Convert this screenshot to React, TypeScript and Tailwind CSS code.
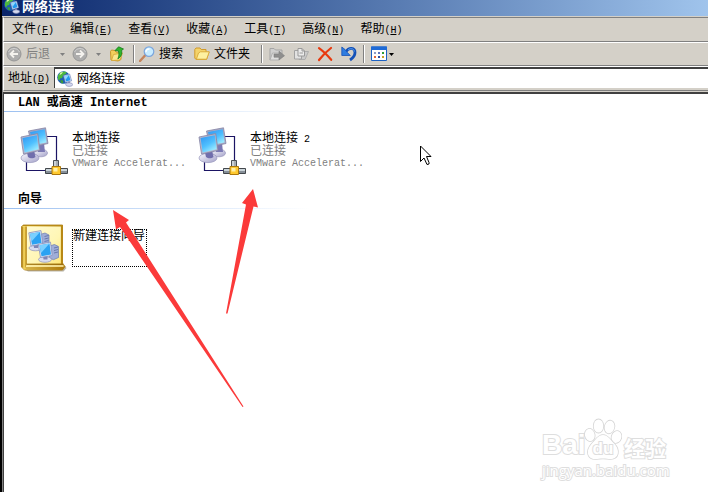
import React from 'react';

const CJK = 'font-["Liberation_Mono","Noto_Sans_CJK_SC",monospace]';

const menus = [
  { label: '文件', key: 'F' },
  { label: '编辑', key: 'E' },
  { label: '查看', key: 'V' },
  { label: '收藏', key: 'A' },
  { label: '工具', key: 'T' },
  { label: '高级', key: 'N' },
  { label: '帮助', key: 'H' },
];

const connections = [
  { name: '本地连接', suffix: '', status: '已连接', device: 'VMware Accelerat...' },
  { name: '本地连接', suffix: ' 2', status: '已连接', device: 'VMware Accelerat...' },
];

const AccessKey: React.FC<{ letter: string }> = ({ letter }) => (
  <span className="text-[10px]">
    (<span className="underline">{letter}</span>)
  </span>
);

const GlobeIcon = () => (
  <svg viewBox="0 0 16 16" className="w-4 h-4 shrink-0">
    <circle cx="6.5" cy="6.5" r="6.3" fill="#1f5fb0" />
    <path d="M1 4.5 3.5 1.2 7.5.4 9.8 1.2 8.4 3.2 6 4.2 5.2 7 3 7.4 2.4 9.6 1 8.2z" fill="#4cb83e" />
    <path d="M3 1.8 6 .8 5 2.6 2.6 4.2z" fill="#d5f2a6" />
    <path d="M3.4 9 6 9.6 6.2 12.4 3.8 11.8z" fill="#3a9c3a" />
    <path d="M6.4 4.6 12.6 3 14.6 9.8 8.4 11.6z" fill="#e8eefb" stroke="#5c70ac" strokeWidth=".6" />
    <path d="M7.3 5.3 12 4.1 13.5 9.2 9 10.5z" fill="#2499ee" />
    <path d="M7.3 5.3 12 4.1 8.6 8.8z" fill="#8fd8ff" />
    <path d="M10.6 10.9 13 10.4 13.2 12h-2z" fill="#7d84b8" />
    <ellipse cx="12.2" cy="13.6" rx="3.5" ry="1.8" fill="#d4d9ee" stroke="#7c83b0" strokeWidth=".6" />
  </svg>
);

const RoundArrow: React.FC<{ forward?: boolean }> = ({ forward }) => (
  <svg viewBox="0 0 16 16" className="w-4 h-4">
    <circle cx="8" cy="8" r="7" fill="#adadad" stroke="#969696" />
    <path d="M2.5 6a6 6 0 0 1 11 0" fill="none" stroke="#cfcfcf" />
    {forward ? (
      <path d="M4 8h7M8 4.5 11.5 8 8 11.5" fill="none" stroke="#f4f2ee" strokeWidth="1.8" />
    ) : (
      <path d="M12 8H5M8 4.5 4.5 8 8 11.5" fill="none" stroke="#f4f2ee" strokeWidth="1.8" />
    )}
  </svg>
);

const Caret: React.FC<{ dark?: boolean }> = ({ dark }) => (
  <svg viewBox="0 0 5 3" className="w-[5px] h-[3px]">
    <path d="M0 0h5L2.5 3z" fill={dark ? '#000' : '#808080'} />
  </svg>
);

const FolderUpIcon = () => (
  <svg viewBox="0 0 16 16" className="w-4 h-4">
    <path d="M1.5 5.5 2.5 4 6 4.5l1 1.500 5 .5v7l-3 1.500-7-1z" fill="#f3cf5b" stroke="#c9962a" />
    <path d="M4.5 8.5 13.5 7 11 14l-8.500.5z" fill="#fbe78e" stroke="#d3a537" strokeWidth=".8" />
    <path d="M6 4.600 9.600.8 14.500 3 12.600 4.400c.6 3.600-.4 6.600-3.800 8.400 1.300-2.400 1.500-5 .6-8z" fill="#2fb52b" stroke="#147a1c" strokeWidth=".8" />
  </svg>
);

const SearchIcon = () => (
  <svg viewBox="0 0 16 16" className="w-4 h-4">
    <path d="M1 15 6 9.5" stroke="#c4845c" strokeWidth="2.4" strokeLinecap="round" />
    <circle cx="10" cy="5.6" r="4.8" fill="#c8ecff" stroke="#7ba6dd" strokeWidth="1.2" />
    <path d="M7 6c0-2 1.5-3.3 3.5-3" fill="none" stroke="#fff" strokeWidth="1.4" />
  </svg>
);

const FolderIcon = () => (
  <svg viewBox="0 0 16 16" className="w-4 h-4">
    <path d="M.8 3.5 2 2h4l1.200 1.500H12V6h3L12.500 13.500H2L.8 12z" fill="#f4d36a" stroke="#d09a2b" strokeLinejoin="round" />
    <path d="M4.500 7 6.500 5.800h8.800L12.600 13.200H2.400z" fill="#fdf0a0" stroke="#d9a838" strokeWidth=".9" strokeLinejoin="round" />
  </svg>
);

const MoveToIcon = () => (
  <svg viewBox="0 0 16 16" className="w-4 h-4">
    <path d="M1 14V2.500h4L6.500 4H13v4" fill="#cfcfcf" stroke="#a5a5a5" />
    <path d="M1 14 3.500 7H12l-2 7z" fill="#dedede" stroke="#b0b0b0" />
    <path d="M5 8h5V5.200l5.500 4.500L10 14v-2.800H5z" fill="#8e8e8e" stroke="#7d7d7d" strokeWidth=".6" />
  </svg>
);

const CopyToIcon = () => (
  <svg viewBox="0 0 16 16" className="w-4 h-4">
    <path d="M6 13.500 9 5.500h6.500L12 13.500z" fill="#cacaca" stroke="#adadad" />
    <path d="M1.500 4.500h5l2 2v6.500h-7z" fill="#e2e2e2" stroke="#a2a2a2" />
    <path d="M5 2.500h4l2.500 2.500v5H5z" fill="#ebebeb" stroke="#999" />
    <path d="M9 2.500V5h2.500M6.500 7h3.500" fill="none" stroke="#999" />
  </svg>
);

const DeleteIcon = () => (
  <svg viewBox="0 0 16 16" className="w-4 h-4">
    <path d="M2 2.200C6 5 10.500 9.500 14.200 13.800M14 2C9.500 5.500 5 10 2 14" fill="none" stroke="#e8390e" strokeWidth="2.2" strokeLinecap="round" />
  </svg>
);

const UndoIcon = () => (
  <svg viewBox="0 0 16 16" className="w-4 h-4">
    <path d="M5 5.500C8 .8 14 1.500 14 6.500c0 3-2 5.500-5 7.500" fill="none" stroke="#1552b8" strokeWidth="2.8" />
    <path d="M.8 1v8.500h8.500L6.600 6.800 4 3.500z" fill="#2d7ce0" stroke="#1552b8" strokeWidth=".8" />
    <path d="M7 4C9 2 12.800 2 13.400 5.500" fill="none" stroke="#5ba2f2" />
  </svg>
);

const ViewsIcon = () => (
  <svg viewBox="0 0 16 16" className="w-4 h-4">
    <path d="M.5 1h15v13.500H.5z" fill="#fff" stroke="#1d62c4" />
    <path d="M0 .5h16V4H0z" fill="#1f6bd6" />
    <path d="M3 6h2v2H3z" fill="#8e9cc4" />
    <path d="M7 6h2v2H7z" fill="#5c74bd" />
    <path d="M11 6h2v2h-2z" fill="#2b9c35" />
    <path d="M3 10h2v2H3z" fill="#e0673c" />
    <path d="M7 10h2v2H7z" fill="#2d4fa0" />
    <path d="M11 10h2v2h-2z" fill="#c9a227" />
  </svg>
);

const Separator = () => <div className="w-[2px] h-[18px] border-l border-[#808080] bg-white" />;

const NetworkIcon: React.FC<{ id: string }> = ({ id }) => (
  <svg viewBox="0 0 48 48" className="w-12 h-12 shrink-0">
    <defs>
      <linearGradient id={`${id}-screen`} x1="0" y1="0" x2=".6" y2="1">
        <stop offset="0" stopColor="#2f92f0" />
        <stop offset=".6" stopColor="#4fc0ff" />
        <stop offset="1" stopColor="#9ceaff" />
      </linearGradient>
      <linearGradient id={`${id}-base`} x1="0" y1="0" x2="1" y2="1">
        <stop offset="0" stopColor="#fafaff" />
        <stop offset="1" stopColor="#a2a0c8" />
      </linearGradient>
    </defs>
    <path d="M27 9.500h9.500V34M6.500 34v9.500H26" fill="none" stroke="#1b1464" strokeWidth="1.2" />
    <ellipse cx="21" cy="26" rx="6.5" ry="3.8" fill={`url(#${id}-base)`} stroke="#9795bb" strokeWidth=".7" />
    <path d="M17 18 24 16.500 25 25H18z" fill="#7b79b4" />
    <path d="M8.500 4 25.500.8 28 16.500 12 20z" fill="#aaaac4" stroke="#8484a6" strokeWidth=".8" />
    <path d="M10 5 24.700 2.300 26.600 15.500 13 18z" fill={`url(#${id}-screen)`} />
    <ellipse cx="10" cy="31" rx="9" ry="4.6" fill={`url(#${id}-base)`} stroke="#9795bb" strokeWidth=".7" />
    <path d="M7 25.500 14 24 15.500 30c-2 1.800-5.500 1.800-7.500 0z" fill="#706eac" />
    <path d="M1 10 17.700 6.600 20 23.400 3.500 27z" fill="#b6b6cc" stroke="#8484a6" strokeWidth=".8" />
    <path d="M2.500 11 16.800 8.200 18.700 22.300 4.700 25.400z" fill={`url(#${id}-screen)`} />
    <path d="M33.500 33.500h5V40h-5z" fill="#a6acb2" stroke="#4c5156" />
    <path d="M35 34v6" stroke="#e6ecf0" strokeWidth="1.2" />
    <path d="M25.500 41.500h22v5h-22z" fill="#868f98" stroke="#43484d" />
    <path d="M26 43h21" stroke="#dbe5ea" strokeWidth="1.6" />
    <path d="M32 39.500h8.500v8H32z" fill="#ffc92f" stroke="#ad780c" />
    <path d="M33.500 41h4v3.500h-4z" fill="#fff0a8" />
  </svg>
);

const MiniComputer = () => (
  <g>
    <path d="M20 10.500 25 9l4 2v11l-5 2.200-4-1.700z" fill="#9fadd8" stroke="#6c7cae" strokeWidth=".7" />
    <path d="M24.500 12.500l4-1M24.500 15l4-1M24.500 17.500l4-1" stroke="#5c6ba0" strokeWidth=".8" />
    <ellipse cx="15.5" cy="24" rx="6.5" ry="2.8" fill="#d8dcf0" stroke="#8c91ba" strokeWidth=".7" />
    <path d="M13.500 20.500 18 20v4h-4z" fill="#7e84b6" />
    <path d="M8.800 8.800 21 6.600 22.700 20 11 22z" fill="#dfe6f8" stroke="#8790ba" strokeWidth=".8" />
    <path d="M10 9.800 20 8 21.500 19 12 20.800z" fill="#2ba2f2" />
    <path d="M10 9.800 20 8 11.500 17.500z" fill="#7ad0ff" />
  </g>
);

const WizardIcon = () => (
  <svg viewBox="0 0 48 48" className="w-12 h-12 shrink-0">
    <defs>
      <linearGradient id="page" x1="0" y1="0" x2="1" y2="1">
        <stop offset="0" stopColor="#fffbd4" />
        <stop offset=".6" stopColor="#fff6b4" />
        <stop offset="1" stopColor="#ffe678" />
      </linearGradient>
      <linearGradient id="spine" x1="0" y1="0" x2="1" y2="0">
        <stop offset="0" stopColor="#9c6c08" />
        <stop offset=".45" stopColor="#ffe268" />
        <stop offset="1" stopColor="#a87406" />
      </linearGradient>
      <linearGradient id="foot" x1="0" y1="0" x2="1" y2="0">
        <stop offset="0" stopColor="#ffe97c" />
        <stop offset="1" stopColor="#b07c0a" />
      </linearGradient>
    </defs>
    <path d="M5 45.500 45 42l1.500 2-3 3.500H8z" fill="#b9b5a8" />
    <path d="M1.500 2.500 3.500 1H42.500v38l2.500 3.500-2.500 3.500H4.500L1.500 43z" fill="url(#foot)" stroke="#a97a10" strokeWidth=".8" />
    <path d="M6 42h37.500" stroke="#fff3b4" strokeWidth="1.4" />
    <path d="M6 44h37.500" stroke="#a8740a" strokeWidth=".8" />
    <path d="M6.500 40.200h36.500" stroke="#94680c" strokeWidth="1.2" />
    <path d="M6.500 2.500H41V39.500H6.500z" fill="url(#page)" />
    <path d="M1.800 2.500h4.900v37L5 46 1.800 43z" fill="url(#spine)" />
    <path d="M3 1.500h39.500" stroke="#b88a16" strokeWidth="1.2" />
    <path d="M41.800 1.500v38" stroke="#b98812" strokeWidth="1.8" />
    <MiniComputer />
    <g transform="translate(9.5 11.5)">
      <MiniComputer />
    </g>
  </svg>
);

const GroupHeader: React.FC<{ children: React.ReactNode }> = ({ children }) => (
  <div className="w-[306px]">
    <h2 className="pl-[14px] pt-[2px] h-[17px] leading-[15px] text-[12px] font-bold whitespace-pre">{children}</h2>
    <div className="h-px bg-linear-to-r from-[#9cc0f0] to-white" />
  </div>
);

const Watermark = () => (
  <div className="absolute right-10 bottom-3 w-[126px] whitespace-nowrap text-white [paint-order:stroke_fill] [-webkit-text-stroke:2px_#dedede]">
    <div className="flex items-end h-[44px]">
      <span className='w-[42px] font-["Liberation_Sans",sans-serif] font-bold text-[28px] leading-[30px]'>Bai</span>
      <div className="relative w-[38px] h-[42px] shrink-0">
        <svg viewBox="0 0 38 42" className="w-full h-full" fill="#fff" stroke="#d6d6d6" strokeWidth="1.6">
          <ellipse cx="5.8" cy="17" rx="4.8" ry="6.2" transform="rotate(-12 5.8 17)" />
          <ellipse cx="14.5" cy="8" rx="4.8" ry="6.6" />
          <ellipse cx="25.5" cy="9" rx="4.8" ry="6.4" transform="rotate(14 25.5 9)" />
          <ellipse cx="32.5" cy="19" rx="4.8" ry="6" transform="rotate(18 32.5 19)" />
          <path d="M19 17c5 0 7 4.500 11 8.500 7 7 4 15.500-3 15.500-3 0-5-.5-8-.5s-5 .5-8 .5C4 41 1 33.500 7.500 26 12 21.500 14 17 19 17z" />
        </svg>
        <span className='absolute inset-x-0 bottom-0 text-center font-["Liberation_Sans",sans-serif] font-bold text-[17px] leading-[22px]'>du</span>
      </div>
      <span className='pl-[2px] font-["Noto_Sans_CJK_SC",sans-serif] font-bold text-[21px] leading-[26px]'>经验</span>
    </div>
    <div className='font-["Open_Sans",sans-serif] text-[15px] leading-[20px]'>jingyan.baidu.com</div>
  </div>
);

export default function App() {
  return (
    <div className={`min-h-screen flex flex-col border-l-2 border-black bg-[#d4d0c8] text-[12px] text-black cursor-default ${CJK}`}>
      <header className="flex items-center gap-[2px] h-4 pl-[2px] overflow-hidden bg-linear-to-r from-[#0a246a] to-[#a0c4ec] text-white">
        <div className="pb-1">
          <GlobeIcon />
        </div>
        <h1 className="text-[13px] leading-[14px] font-bold">网络连接</h1>
      </header>

      <div className="flex flex-col grow mt-px border-l border-[#808080]">
        <nav className="flex items-center h-[25px] pt-[2px] border-t border-b border-t-[#808080] border-b-[#808080] border-l border-l-white">
          {menus.map((m) => (
            <button key={m.key} type="button" className="px-2 leading-4 whitespace-nowrap">
              {m.label}
              <AccessKey letter={m.key} />
            </button>
          ))}
        </nav>

        <div className="flex items-center h-6 pl-[2px] border-t border-b border-t-white border-b-[#808080] border-l border-l-white">
          <button type="button" className="flex items-center gap-1 text-[#808080]">
            <RoundArrow />
            <span className="pt-px">后退</span>
          </button>
          <button type="button" aria-label="后退历史" className="pl-[10px] pr-[7px]">
            <Caret />
          </button>
          <button type="button" aria-label="前进">
            <RoundArrow forward />
          </button>
          <button type="button" aria-label="前进历史" className="px-2">
            <Caret />
          </button>
          <button type="button" aria-label="向上" className="mr-2">
            <FolderUpIcon />
          </button>
          <Separator />
          <button type="button" className="flex items-center gap-1 ml-1">
            <SearchIcon />
            <span className="pt-px">搜索</span>
          </button>
          <button type="button" className="flex items-center gap-1 mx-[11px]">
            <FolderIcon />
            <span className="pt-px">文件夹</span>
          </button>
          <Separator />
          <div className="flex gap-2 mx-[6px]">
            <button type="button" aria-label="移至">
              <MoveToIcon />
            </button>
            <button type="button" aria-label="复制到">
              <CopyToIcon />
            </button>
            <button type="button" aria-label="删除">
              <DeleteIcon />
            </button>
            <button type="button" aria-label="撤消">
              <UndoIcon />
            </button>
          </div>
          <Separator />
          <button type="button" aria-label="查看" className="flex items-center gap-[2px] ml-[6px]">
            <ViewsIcon />
            <Caret dark />
          </button>
        </div>

        <div className="flex items-center h-[25px] border-t border-b border-t-white border-b-[#808080] border-l border-l-white">
          <label htmlFor="address" className="px-1 whitespace-nowrap">
            地址
            <AccessKey letter="D" />
          </label>
          <div className="flex items-center grow h-[21px] mb-[2px] pl-[2px] gap-1 bg-white border-l border-t-2 border-[#404040]">
            <GlobeIcon />
            <input
              id="address"
              type="text"
              defaultValue="网络连接"
              className="grow min-w-0 h-[18px] pt-[2px] bg-transparent outline-none"
            />
          </div>
        </div>

        <main className="relative grow mt-px bg-white border-t-2 border-l border-[#404040]">
          <GroupHeader>
            LAN 或高速 Internet
          </GroupHeader>
          <div className="flex flex-wrap pl-4 pt-[15px]">
            {connections.map((c, i) => (
              <button key={i} type="button" className="flex w-[178px] gap-1 text-left">
                <NetworkIcon id={`net${i}`} />
                <span className="flex flex-col pt-[6px] leading-3 whitespace-pre">
                  <span>
                    {c.name}
                    <span className="text-[10px]">{c.suffix}</span>
                  </span>
                  <span className="text-[#808080]">{c.status}</span>
                  <span className="text-[10px] text-[#808080]">{c.device}</span>
                </span>
              </button>
            ))}
          </div>

          <div className="pt-4">
            <GroupHeader>向导</GroupHeader>
          </div>
          <div className="pl-4 pt-[15px]">
            <button type="button" className="flex gap-1 text-left">
              <WizardIcon />
              <span className="mt-[5px] h-[38px] w-[75px] border border-dotted border-black leading-[14px] whitespace-nowrap">
                新建连接向导
              </span>
            </button>
          </div>

          {/* pointer and annotation arrows float above the icon list */}
          <svg viewBox="0 0 160 224" className="absolute left-[104px] top-[93px] w-[160px] h-[224px] pointer-events-none" fill="#fb3a3a">
            <path d="M5 23 21 33 18 35.500 135.500 219.500 134.500 220 12 40 8 42.500z" />
            <path d="M145 2 150 20.500 145.500 19.500 119.500 126.500H118L138 17.500 134 16z" />
          </svg>
          <svg viewBox="0 0 12 21" className="absolute left-[416px] top-[51px] w-3 h-[21px]" fill="#fff" stroke="#000">
            <path d="M.5 1v15.500L4 13l3 6.500 2-.5v-1.500L6.500 11.500H11z" />
          </svg>
          <Watermark />
        </main>
      </div>
    </div>
  );
}
